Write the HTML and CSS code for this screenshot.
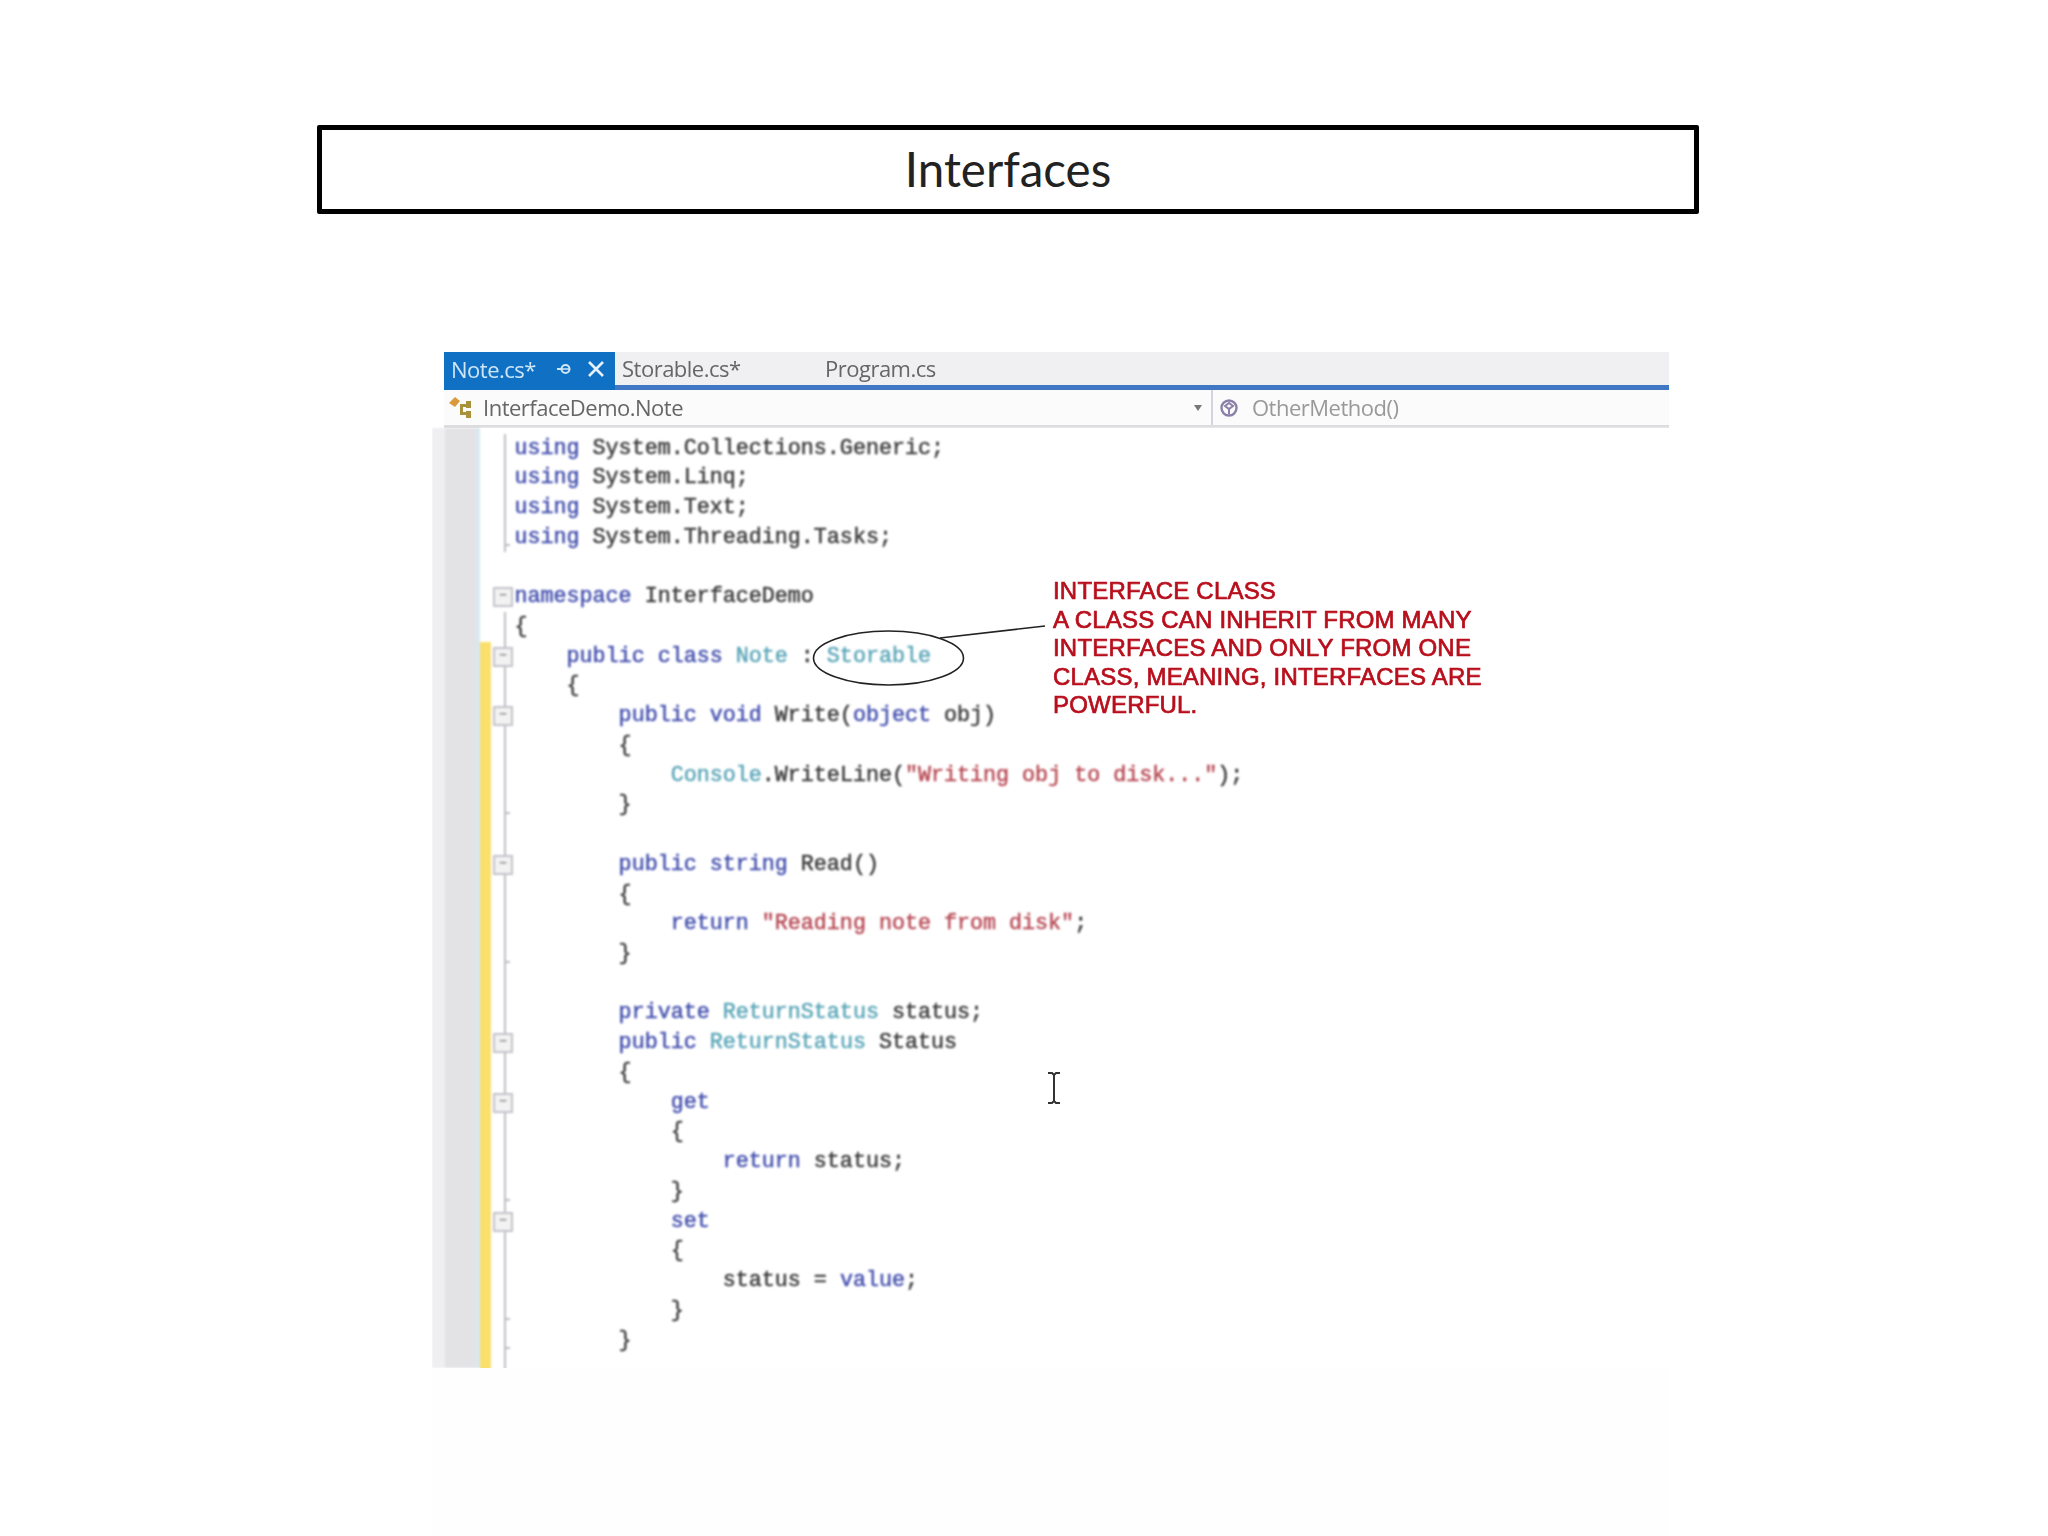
FILE: index.html
```html
<!DOCTYPE html>
<html lang="en">
<head>
<meta charset="utf-8">
<title>Interfaces</title>
<link rel="stylesheet" href="styles.css">
</head>
<body>
<h1 class="title">Interfaces</h1>
<section class="screen">
  <div class="tabs">
    <div class="tab active"><span>Note.cs*</span>
      <svg class="pin" width="14" height="12" viewBox="0 0 14 12"><path d="M0 6h4" fill="none" stroke="#cfe6f7" stroke-width="2"/><circle cx="8.500" cy="6" r="4" fill="none" stroke="#cfe6f7" stroke-width="2"/><path d="M5 6h7" stroke="#cfe6f7" stroke-width="1.500"/></svg>
      <svg class="close" width="18" height="18" viewBox="0 0 18 18"><path d="M2 2l14 14M16 2L2 16" fill="none" stroke="#e4f1fb" stroke-width="2.600"/></svg>
    </div>
    <div class="tab">Storable.cs*</div>
    <div class="tab">Program.cs</div>
  </div>
  <div class="nav">
    <div class="nav-left">
      <svg width="26" height="26" viewBox="0 0 26 26"><path d="M1 8l6-6 5 4-5 6z" fill="#d99a3c"/><path d="M12 9h6v-3h5v7h-5v-1h-3v5h3v-1h5v7h-5v-3h-6z" fill="#a8933c"/></svg>
      <span>InterfaceDemo.Note</span>
      <svg class="arrow" width="10" height="6" viewBox="0 0 10 6"><path d="M1 0h8L5 6z" fill="#777"/></svg>
    </div>
    <div class="nav-right">
      <svg width="20" height="20" viewBox="0 0 20 20"><circle cx="10" cy="10" r="7.500" fill="none" stroke="#8a80a8" stroke-width="2.400"/><path d="M6 8l4-3 4 3-4 3zM10 11v5" fill="none" stroke="#8a80a8" stroke-width="2"/></svg>
      <span>OtherMethod()</span>
    </div>
  </div>
  <div class="code">
    <div class="row"><i class="chg"></i><i class="fold line"></i><code>using <b>System.Collections.Generic;</b></code></div>
    <div class="row"><i class="chg"></i><i class="fold line"></i><code>using <b>System.Linq;</b></code></div>
    <div class="row"><i class="chg"></i><i class="fold line"></i><code>using <b>System.Text;</b></code></div>
    <div class="row"><i class="chg"></i><i class="fold line end"></i><code>using <b>System.Threading.Tasks;</b></code></div>
    <div class="row"><i class="chg"></i><i class="fold"></i><code></code></div>
    <div class="row"><i class="chg"></i><i class="fold box"></i><code>namespace <b>InterfaceDemo</b></code></div>
    <div class="row"><i class="chg"></i><i class="fold line"></i><code><b>{</b></code></div>
    <div class="row"><i class="chg y"></i><i class="fold line box"></i><code>    public class <u>Note</u> <b>:</b> <u>Storable</u></code></div>
    <div class="row"><i class="chg y"></i><i class="fold line"></i><code><b>    {</b></code></div>
    <div class="row"><i class="chg y"></i><i class="fold line box"></i><code>        public void <b>Write(</b>object <b>obj)</b></code></div>
    <div class="row"><i class="chg y"></i><i class="fold line"></i><code><b>        {</b></code></div>
    <div class="row"><i class="chg y"></i><i class="fold line"></i><code>            <u>Console</u><b>.WriteLine(</b><s>"Writing obj to disk..."</s><b>);</b></code></div>
    <div class="row"><i class="chg y"></i><i class="fold line end"></i><code><b>        }</b></code></div>
    <div class="row"><i class="chg y"></i><i class="fold line"></i><code></code></div>
    <div class="row"><i class="chg y"></i><i class="fold line box"></i><code>        public string <b>Read()</b></code></div>
    <div class="row"><i class="chg y"></i><i class="fold line"></i><code><b>        {</b></code></div>
    <div class="row"><i class="chg y"></i><i class="fold line"></i><code>            return <s>"Reading note from disk"</s><b>;</b></code></div>
    <div class="row"><i class="chg y"></i><i class="fold line end"></i><code><b>        }</b></code></div>
    <div class="row"><i class="chg y"></i><i class="fold line"></i><code></code></div>
    <div class="row"><i class="chg y"></i><i class="fold line"></i><code>        private <u>ReturnStatus</u> <b>status;</b></code></div>
    <div class="row"><i class="chg y"></i><i class="fold line box"></i><code>        public <u>ReturnStatus</u> <b>Status</b></code></div>
    <div class="row"><i class="chg y"></i><i class="fold line"></i><code><b>        {</b></code></div>
    <div class="row"><i class="chg y"></i><i class="fold line box"></i><code>            get</code></div>
    <div class="row"><i class="chg y"></i><i class="fold line"></i><code><b>            {</b></code></div>
    <div class="row"><i class="chg y"></i><i class="fold line"></i><code>                return <b>status;</b></code></div>
    <div class="row"><i class="chg y"></i><i class="fold line end"></i><code><b>            }</b></code></div>
    <div class="row"><i class="chg y"></i><i class="fold line box"></i><code>            set</code></div>
    <div class="row"><i class="chg y"></i><i class="fold line"></i><code><b>            {</b></code></div>
    <div class="row"><i class="chg y"></i><i class="fold line"></i><code><b>                status = </b>value<b>;</b></code></div>
    <div class="row"><i class="chg y"></i><i class="fold line end"></i><code><b>            }</b></code></div>
    <div class="row"><i class="chg y"></i><i class="fold line end"></i><code><b>        }</b></code></div>
    <div class="row"><i class="chg y"></i><i class="fold line"></i><code></code></div>
  </div>
  <svg class="callout" width="260" height="70" viewBox="0 0 260 70"><ellipse cx="76.500" cy="28" rx="75" ry="27" fill="none" stroke="#222" stroke-width="1.600"/><path d="M128 8l105-12" fill="none" stroke="#222" stroke-width="1.600"/></svg>
  <p class="note">INTERFACE CLASS<br>A CLASS CAN INHERIT FROM MANY<br>INTERFACES AND ONLY FROM ONE<br>CLASS, MEANING, INTERFACES ARE<br>POWERFUL.</p>
  <svg class="ibeam" width="16" height="34" viewBox="0 0 16 34"><path d="M2 2h4l2 2 2-2h4M8 4v26M2 32h4l2-2 2 2h4" fill="none" stroke="#333" stroke-width="2"/></svg>
</section>
<div class="below"></div>
</body>
</html>
```
FILE: styles.css
```css
* { box-sizing: border-box; }
html, body { margin: 0; padding: 0; background: #fff; }
body { width: 2048px; height: 1536px; overflow: hidden; }

.title {
  margin: 125px 0 0 317px;
  width: 1382px;
  height: 89px;
  border: 5.500px solid #000;
  border-radius: 2px;
  font: 400 47.500px/77px Lato, "Open Sans", sans-serif;
  color: #222;
  text-align: center;
}

.screen {
  position: relative;
  margin: 138px 0 0 432px;
  width: 1237px;
  height: 1016px;
  overflow: hidden;
  background: #fff;
}

.tabs {
  margin-left: 12px;
  height: 38px;
  display: flex;
  background: #f0f0f2;
  border-bottom: 5px solid #3f77c4;
  font: 22px/33px "Open Sans", sans-serif;
  letter-spacing: -0.5px;
  color: #666;
  filter: blur(0.7px);
}
.tab { padding-left: 7px; width: 203px; }
.tab.active {
  width: 171px;
  margin-bottom: -5px;
  display: flex;
  align-items: center;
  background: #0f70c4;
  color: #cfe6f7;
  padding-bottom: 4px;
}
.tab.active span { width: 106px; }
.pin { margin-right: 16px; }

.nav {
  margin-left: 12px;
  height: 38px;
  display: flex;
  background: #fbfbfb;
  border-bottom: 3px solid #dcdcde;
  font: 22px/35px "Open Sans", sans-serif;
  letter-spacing: -0.5px;
  filter: blur(0.7px);
}
.nav-left {
  width: 769px;
  padding-left: 4px;
  display: flex;
  align-items: center;
  gap: 9px;
  color: #666;
  border-right: 2px solid #d4d4da;
}
.nav-left span { flex: 1; }
.arrow { margin-right: 8px; }
.nav-right {
  display: flex;
  align-items: center;
  gap: 13px;
  padding-left: 6px;
  color: #999;
}

.code {
  height: 940px;
  padding-top: 5.500px;
  background: linear-gradient(90deg, #efeff1 0 13px, #e3e3e5 13px 44px, #d8e8ee 44px 48px, #fff 48px);
  filter: blur(0.9px);
}
.row { display: flex; height: 29.740px; }
.chg { width: 11px; margin-left: 48px; }
.chg.y { background: #fbdf6c; }
.fold { position: relative; width: 23.500px; }
.fold.line::before {
  content: "";
  position: absolute;
  left: 13px;
  top: 0;
  bottom: 0;
  width: 2px;
  background: #bcbcc4;
}
.fold.end::after {
  content: "";
  position: absolute;
  left: 13px;
  bottom: 6px;
  width: 6px;
  height: 2px;
  background: #bcbcc4;
}
.fold.box::after {
  content: "−";
  position: absolute;
  left: 2px;
  top: 5px;
  width: 16px;
  height: 16px;
  border: 2px solid #c4c4ca;
  background: #f2f2f2;
  font: 700 13px/11px "Liberation Sans", sans-serif;
  color: #888;
  text-align: center;
}

code {
  font: 21.700px/29.740px "Liberation Mono", monospace;
  white-space: pre;
  color: #4450ae;
  -webkit-text-stroke: 0.5px currentColor;
}
code b { font-weight: 400; color: #3c3c3c; }
code u { text-decoration: none; color: #5ba6b8; }
code s { text-decoration: none; color: #b84a55; }

.callout {
  position: absolute;
  left: 380px;
  top: 278px;
  overflow: visible;
  filter: blur(0.5px);
}
.note {
  position: absolute;
  left: 621px;
  top: 225px;
  margin: 0;
  font: 400 24px/28.500px "Liberation Sans", sans-serif;
  letter-spacing: 0.2px;
  color: #b80f1c;
  -webkit-text-stroke: 0.7px currentColor;
  white-space: nowrap;
  filter: blur(0.5px);
}
.ibeam { position: absolute; left: 614px; top: 719px; filter: blur(0.5px); }

.below { margin-left: 432px; width: 1237px; height: 168px; background: #fefefe; }
```
